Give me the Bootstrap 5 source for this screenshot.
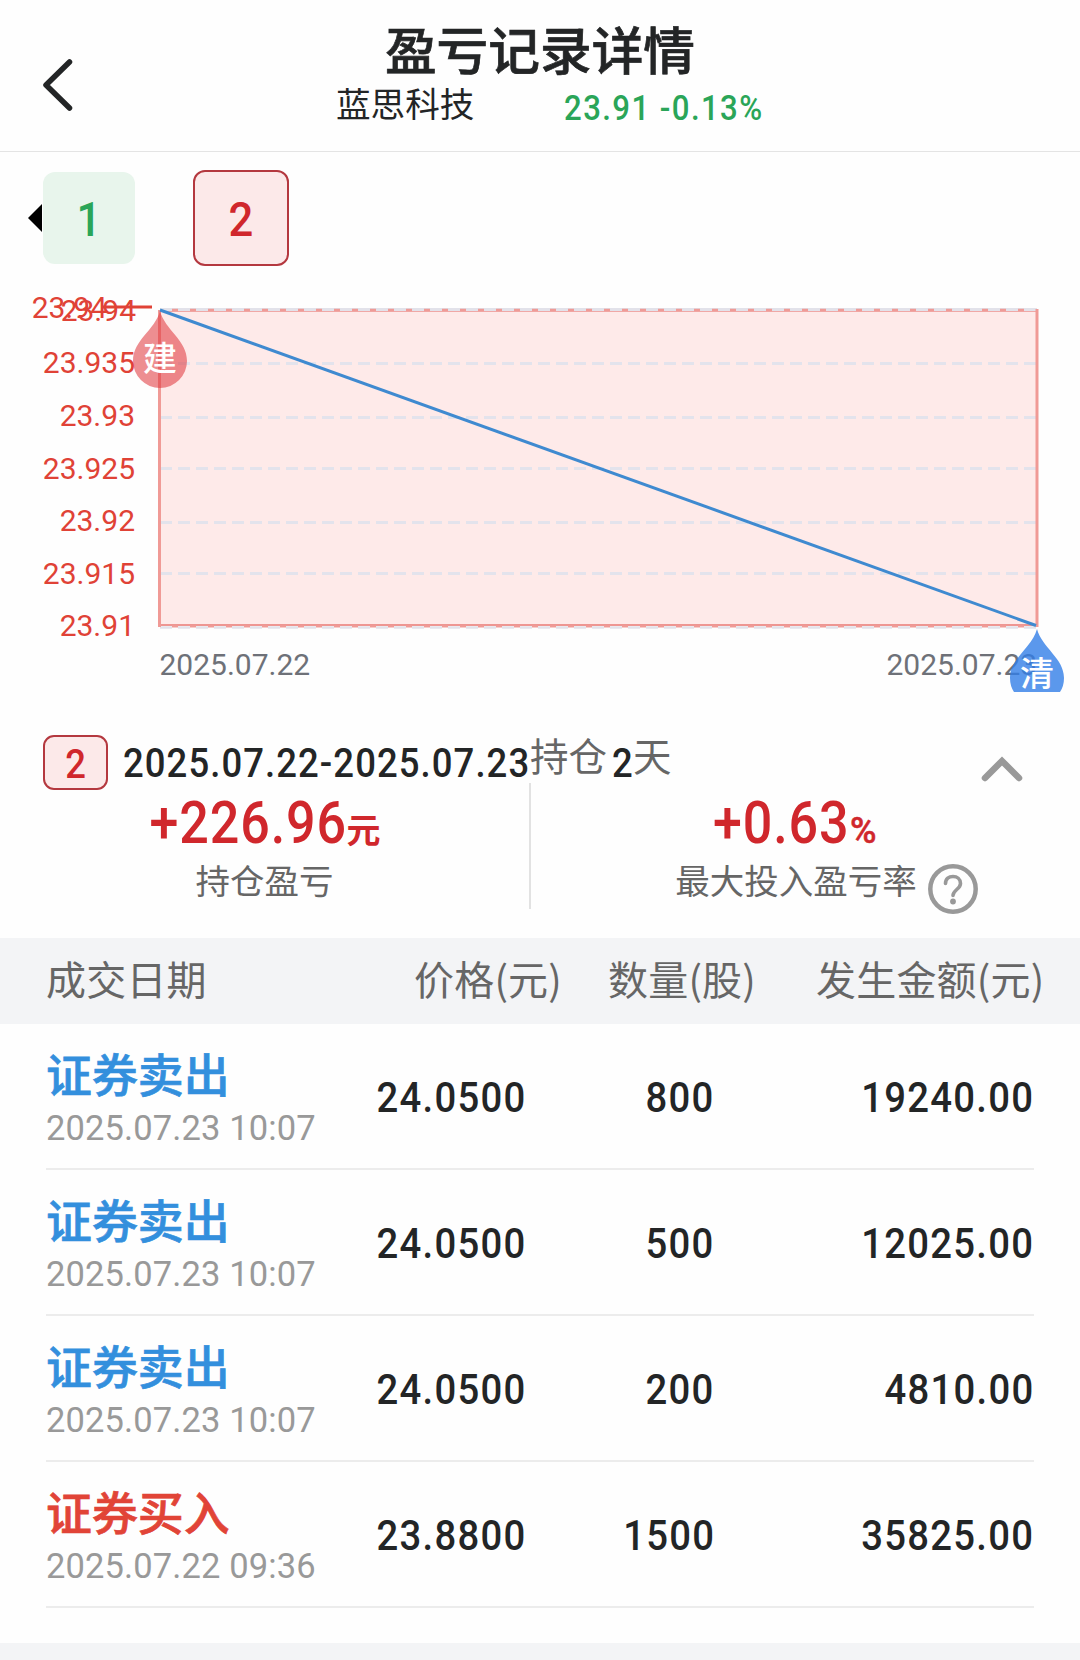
<!DOCTYPE html>
<html lang="zh-CN">
<head>
<meta charset="utf-8">
<meta name="viewport" content="width=device-width, initial-scale=1">
<title>盈亏记录详情</title>
<link href="https://cdn.jsdelivr.net/npm/bootstrap@5.3.0/dist/css/bootstrap.min.css" rel="stylesheet">
<style>
  body { width: 1080px; height: 1660px; overflow: hidden; background: #fefefe; color: #232526; font-family: "Noto Sans CJK SC", sans-serif; }
  .num { font-family: Roboto, "Noto Sans CJK SC", sans-serif; font-weight: 500; white-space: nowrap; }
  /* narrow, DIN-like figures */
  .din { display: inline-block; transform: scaleX(.89); letter-spacing: 1.4px; }
  .din-l { transform-origin: left; }
  .din-r { transform-origin: right; }
  .up { color: #d0272c; }
  .down { color: #2aa558; }
  .muted { color: #666; }
  .topbar { height: 152px; border-bottom: 1px solid #e4e4e4; padding-top: 18px; }
  .back { left: 40px; top: 56px; }
  .title { font-size: 51.7px; line-height: 60px; font-weight: 500; -webkit-text-stroke: .7px; margin: 0; }
  .sub { padding-left: 336px; height: 48px; }
  .stock { font-size: 34.6px; line-height: 48px; width: 228px; }
  .quote { font-size: 35px; line-height: 62px; }
  .quote .din { letter-spacing: 1.6px; }
  .tabs { height: 128px; padding: 18px 0 0 28px; }
  .prev { border: solid transparent; border-width: 14px 14px 14px 0; border-right-color: #000; margin-right: 1px; margin-top: 34px; height: 0; }
  .tab { font-size: 49px; border-radius: 12px; padding: 4px 0 0 2px; }
  .tab1 { width: 92px; height: 92px; margin-top: 2px; background: #e8f5ec; }
  .tab2 { width: 96px; height: 96px; margin-left: 58px; background: #fce9e9; border: 2px solid #b4383f; }
  .chart { display: block; font-family: Roboto, sans-serif; font-size: 30px; }
  .chart .cn { font-family: "Noto Sans CJK SC", sans-serif; font-size: 34px; font-weight: 500; }
  .period { height: 83px; padding: 35px 57px 0 43px; }
  .badge2 { width: 65px; height: 55px; border: 2px solid #b4383f; border-radius: 11px; background: #fce9e9; font-size: 41px; padding: 4px 0 0 2px; }
  .range { font-size: 41px; line-height: 56px; margin-left: 15px; width: 407px; }
  .range .din { letter-spacing: 1.2px; }
  .held { font-size: 38.5px; line-height: 39px; }
  .held .num { font-size: 41px; line-height: 56px; color: #232526; width: 20px; margin: 0 1px 0 5px; }
  .toggle { margin: 21px 0 0 auto; }
  .stats { height: 155px; }
  .stat { height: 126px; }
  .stat-l { width: 531px; border-right: 2px solid #e2e2e2; }
  .stat-r { width: 549px; }
  .big { font-size: 58.5px; line-height: 80px; height: 79px; }
  .big .din { letter-spacing: 1px; margin-left: -24px; }
  .stat-r .big { padding-right: 15px; }
  .stat-r .cap { padding-left: 43px; }
  .unit { font-size: 34px; font-weight: 700; }
  .pct { font-size: 36px; font-weight: 500; -webkit-text-stroke: .5px; margin-left: 1px; }
  .cap { font-size: 34.5px; line-height: 40px; margin-top: -3px; }
  .help { margin: 4px 0 0 10px; }
  .thead { height: 86px; background: #f3f4f6; font-size: 40px; line-height: 81px; letter-spacing: .2px; color: #666; padding: 0 34px 0 46px; }
  .h1c { width: 368px; } .h2c { width: 194px; } .h3c { width: 208px; }
  .deal { height: 146px; margin: 0 46px; border-bottom: 2px solid #ececec; }
  .kind { font-size: 45.9px; line-height: 60px; font-weight: 500; -webkit-text-stroke: .7px; padding-top: 18px; }
  .sell { color: #338fdd; } .buy { color: #e14437; }
  .time { font-size: 34.5px; line-height: 40px; font-weight: 400; color: #999; margin-top: 6px; letter-spacing: .13px; }
  .val { font-size: 43px; line-height: 146px; text-align: right; }
  .c1 { width: 300px; } .c2 { width: 180px; } .c3 { width: 189px; } .c4 { width: 319px; }
  .foot { height: 17px; margin-top: 35px; background: #f3f4f6; }
</style>
<script src="https://cdn.jsdelivr.net/npm/bootstrap@5.3.0/dist/js/bootstrap.bundle.min.js"></script>
</head>
<body>
<header class="topbar position-relative">
  <svg class="back position-absolute" width="36" height="58" viewBox="0 0 36 58" fill="none" stroke="#232526" stroke-width="5.5" stroke-linecap="round" stroke-linejoin="round"><path d="M29.500 6 6 29 29.500 52"/></svg>
  <h1 class="title text-center">盈亏记录详情</h1>
  <div class="sub d-flex">
    <span class="stock">蓝思科技</span>
    <span class="quote num down"><span class="din din-l">23.91 -0.13%</span></span>
  </div>
</header>

<nav class="tabs d-flex align-items-start">
  <span class="prev"></span>
  <a class="tab tab1 num down d-flex align-items-center justify-content-center text-decoration-none"><span class="din">1</span></a>
  <a class="tab tab2 num up d-flex align-items-center justify-content-center text-decoration-none"><span class="din">2</span></a>
</nav>

<svg class="chart" width="1080" height="420" viewBox="0 280 1080 420">
  <rect x="160" y="310" width="877" height="316" fill="#feeae9"/>
  <g stroke="#e3e3ec" stroke-width="3" stroke-dasharray="12 6">
    <path d="M160 363.500H1036"/><path d="M160 417.500H1036"/><path d="M160 468.500H1036"/><path d="M160 522.500H1036"/><path d="M160 573.500H1036"/>
  </g>
  <path d="M160 311.500H1037" stroke="#f0a8a6" stroke-width="1"/>
  <path d="M160 309.500H1037" stroke="#e2e2ea" stroke-width="3"/>
  <path d="M172 310H1034" stroke="#ef9b97" stroke-width="2.500" stroke-dasharray="6 12"/>
  <path d="M160 625H1037" stroke="#ee9692" stroke-width="2"/>
  <path d="M160 627.500H1037" stroke="#e2e2ea" stroke-width="2.500" stroke-dasharray="12 6"/>
  <path d="M172 626.500H1034" stroke="#ef9b97" stroke-width="2" stroke-dasharray="6 12"/>
  <path d="M159.500 310V627M1037 309V627" stroke="#f09a96" stroke-width="3"/>
  <path d="M160 310 1036 625.500" stroke="#3f8ad0" stroke-width="3"/>
  <g fill="#e04236" text-anchor="end">
    <text x="107" y="318">23.94</text>
    <text x="136" y="321">23.94</text>
    <text x="135" y="372.500">23.935</text>
    <text x="135" y="425.500">23.93</text>
    <text x="135" y="478.500">23.925</text>
    <text x="135" y="530.500">23.92</text>
    <text x="135" y="583.500">23.915</text>
    <text x="135" y="635.500">23.91</text>
  </g>
  <path d="M101 307H152" stroke="#e04236" stroke-width="3"/>
  <g fill="#6e7178">
    <text x="159.500" y="674.500">2025.07.22</text>
    <text x="886.500" y="674.500">2025.07.23</text>
  </g>
  <path d="M160 311C165 330 187 340 187 361A27 27 0 0 1 133 361C133 340 155 330 160 311Z" fill="#e0393e" fill-opacity=".57"/>
  <text class="cn" x="160" y="370.500" fill="#fff" text-anchor="middle">建</text>
  <path d="M1037 629C1042 648 1064 658 1064 678Q1064 686 1060 692H1014Q1010 686 1010 678C1010 658 1032 648 1037 629Z" fill="#327ee7" fill-opacity=".8"/>
  <text class="cn" x="1037" y="686" fill="#fff" text-anchor="middle">清</text>
</svg>

<section class="period d-flex align-items-start">
  <span class="badge2 num up d-flex align-items-center justify-content-center"><span class="din">2</span></span>
  <span class="range num flex-shrink-0"><span class="din din-l">2025.07.22-2025.07.23</span></span>
  <span class="held muted d-flex"><span>持仓</span><span class="num"><span class="din din-l">2</span></span><span>天</span></span>
  <svg class="toggle" width="42" height="26" viewBox="0 0 42 26" fill="none" stroke="#999" stroke-width="6.500" stroke-linecap="round"><path d="M4 22 21 5 38 22"/></svg>
</section>

<section class="stats d-flex">
  <div class="stat stat-l text-center">
    <div class="big num up"><span class="din din-r">+226.96</span><span class="unit">元</span></div>
    <div class="cap muted">持仓盈亏</div>
  </div>
  <div class="stat stat-r">
    <div class="big num up text-center"><span class="din din-r">+0.63</span><span class="pct">%</span></div>
    <div class="cap muted d-flex justify-content-center"><span>最大投入盈亏率</span>
      <svg class="help flex-shrink-0" width="52" height="52" viewBox="0 0 52 52" fill="none" stroke="#999" stroke-width="4.500" stroke-linecap="round"><circle cx="26" cy="26" r="22.700"/><path d="M18.500 20.500C18.500 15.500 22 13.500 26 13.500S33.500 16 33.500 20.500C33.500 26 26 27 26 32.500" stroke-width="3.600"/><circle cx="26" cy="38.500" r="2.900" fill="#999" stroke="none"/></svg>
    </div>
  </div>
</section>

<main>
  <div class="thead d-flex"><span class="h1c">成交日期</span><span class="h2c">价格(元)</span><span class="h3c">数量(股)</span><span>发生金额(元)</span></div>
  <div class="deal d-flex">
    <div class="c1"><div class="kind sell">证券卖出</div><div class="time num">2025.07.23 10:07</div></div>
    <div class="c2 val num"><span class="din din-r">24.0500</span></div><div class="c3 val num"><span class="din din-r">800</span></div><div class="c4 val num"><span class="din din-r">19240.00</span></div>
  </div>
  <div class="deal d-flex">
    <div class="c1"><div class="kind sell">证券卖出</div><div class="time num">2025.07.23 10:07</div></div>
    <div class="c2 val num"><span class="din din-r">24.0500</span></div><div class="c3 val num"><span class="din din-r">500</span></div><div class="c4 val num"><span class="din din-r">12025.00</span></div>
  </div>
  <div class="deal d-flex">
    <div class="c1"><div class="kind sell">证券卖出</div><div class="time num">2025.07.23 10:07</div></div>
    <div class="c2 val num"><span class="din din-r">24.0500</span></div><div class="c3 val num"><span class="din din-r">200</span></div><div class="c4 val num"><span class="din din-r">4810.00</span></div>
  </div>
  <div class="deal d-flex">
    <div class="c1"><div class="kind buy">证券买入</div><div class="time num">2025.07.22 09:36</div></div>
    <div class="c2 val num"><span class="din din-r">23.8800</span></div><div class="c3 val num"><span class="din din-r">1500</span></div><div class="c4 val num"><span class="din din-r">35825.00</span></div>
  </div>
</main>
<footer class="foot"></footer>
</body>
</html>
